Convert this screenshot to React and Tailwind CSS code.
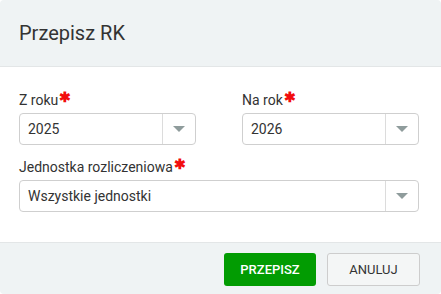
const Arrow = () => (
  <svg width="12" height="6" viewBox="0 0 12 6">
    <path d="M0 0 L12 0 L6 6 Z" fill="#8f9c9c" />
  </svg>
)

function Select({ value, className = '' }) {
  return (
    <div className={`flex h-[32px] items-stretch rounded-[4px] border border-[#cfcfcf] bg-white ${className}`}>
      <div className="flex flex-1 items-center pl-[8px] text-[14px] text-[#333]">{value}</div>
      <div className="flex w-[33px] items-center justify-center border-l border-[#dcdcdc]">
        <Arrow />
      </div>
    </div>
  )
}

function Label({ children }) {
  return (
    <div className="flex h-[16px] items-center text-[14px] leading-[16px] text-[#333]">
      {children}
      <span className="ml-[1px] -mt-[6px] text-[14px] font-bold text-[#f20d0d]">✱</span>
    </div>
  )
}

export default function App() {
  return (
    <div className="flex h-[294px] w-[441px] flex-col overflow-hidden rounded-[4px] bg-white font-['Roboto',sans-serif]">
      <div className="flex h-[67px] items-center border-b border-[#e3e6e7] bg-[#eff3f4] pl-[19px]">
        <h1 className="text-[20px] leading-none text-[#333]">Przepisz RK</h1>
      </div>

      <div className="flex flex-1 flex-col pl-[19px] pr-[22px] pt-[25px]">
        <div className="grid grid-cols-2 gap-[46px]">
          <div>
            <Label>Z roku</Label>
            <Select value="2025" className="mt-[5px]" />
          </div>
          <div>
            <Label>Na rok</Label>
            <Select value="2026" className="mt-[5px]" />
          </div>
        </div>
        <div className="mt-[14px]">
          <Label>Jednostka rozliczeniowa</Label>
          <Select value="Wszystkie jednostki" className="mt-[5px]" />
        </div>
      </div>

      <div className="flex h-[52px] items-start justify-end gap-[11px] border-t border-[#e3e6e7] bg-[#eff3f4] pr-[21px] pt-[10px]">
        <button className="h-[33px] w-[92px] rounded-[3px] bg-[#029c02] text-[13px] font-medium text-white">
          PRZEPISZ
        </button>
        <button className="h-[33px] w-[93px] rounded-[3px] border border-[#cdcdcd] bg-[#f4f6f6] text-[13px] text-[#333]">
          ANULUJ
        </button>
      </div>
    </div>
  )
}
